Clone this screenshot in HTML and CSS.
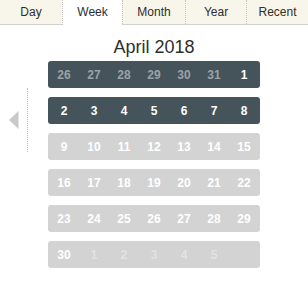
FILE: index.html
```html
<!DOCTYPE html>
<html>
<head>
<meta charset="utf-8">
<link rel="stylesheet" href="styles.css">
</head>
<body>
<div class="tabs">
  <div class="tab">Day</div>
  <div class="tab active">Week</div>
  <div class="tab">Month</div>
  <div class="tab">Year</div>
  <div class="tab">Recent</div>
</div>
<div class="main">
  <div class="nav">
    <svg class="arrow" width="10" height="18" viewBox="0 0 10 18"><polygon points="9.5,0 9.5,18 0,9" fill="#c9c9c9"/></svg>
    <div class="vline"></div>
  </div>
  <div class="cal">
    <div class="title">April 2018</div>
    <div class="weeks">
      <div class="week dark"><span class="out">26</span><span class="out">27</span><span class="out">28</span><span class="out">29</span><span class="out">30</span><span class="out">31</span><span>1</span></div>
      <div class="week dark"><span>2</span><span>3</span><span>4</span><span>5</span><span>6</span><span>7</span><span>8</span></div>
      <div class="week"><span>9</span><span>10</span><span>11</span><span>12</span><span>13</span><span>14</span><span>15</span></div>
      <div class="week"><span>16</span><span>17</span><span>18</span><span>19</span><span>20</span><span>21</span><span>22</span></div>
      <div class="week"><span>23</span><span>24</span><span>25</span><span>26</span><span>27</span><span>28</span><span>29</span></div>
      <div class="week"><span>30</span><span class="out">1</span><span class="out">2</span><span class="out">3</span><span class="out">4</span><span class="out">5</span><span class="empty"></span></div>
    </div>
  </div>
  <div class="side"></div>
</div>
</body>
</html>
```
FILE: styles.css
```css
html, body {
  margin: 0;
  padding: 0;
  background: #fff;
  font-family: "Liberation Sans", Arial, Helvetica, sans-serif;
  color: #333;
}

.tabs {
  display: grid;
  grid-template-columns: 62px 60px 63px 61px 62px;
  height: 24px;
  background: #f8f6eb;
  border-bottom: 1px solid #d0d0d0;
}

.tab {
  display: flex;
  align-items: center;
  justify-content: center;
  font-size: 12px;
  color: #2e2e2e;
  border-left: 1px dotted #c4c4c4;
  padding-bottom: 1px;
}

.tab:first-child {
  border-left: none;
}

.tab.active {
  background: #fff;
  margin-bottom: -1px;
}

.main {
  display: grid;
  grid-template-columns: 48px 212px 48px;
}

.nav {
  display: flex;
  align-items: center;
  padding-top: 63px;
  align-self: start;
  height: 64px;
}

.arrow {
  margin-left: 9px;
  display: block;
}

.vline {
  margin-left: 8px;
  width: 0;
  height: 64px;
  border-left: 1px dotted #c4c4c4;
}

.cal {
  display: flex;
  flex-direction: column;
  align-items: stretch;
}

.title {
  text-align: center;
  font-size: 18px;
  line-height: 20px;
  margin-top: 12px;
  margin-bottom: 4px;
  color: #2e2e2e;
}

.weeks {
  display: flex;
  flex-direction: column;
  gap: 9px;
}

.week {
  display: grid;
  grid-template-columns: repeat(7, 1fr);
  height: 27px;
  border-radius: 3px;
  background: #d3d3d3;
  padding: 0 1px;
}

.week span {
  display: flex;
  align-items: center;
  justify-content: center;
  font-size: 12px;
  font-weight: bold;
  color: #fff;
}

.week span.out {
  color: #e2e2e2;
}

.week.dark {
  background: #45535b;
}

.week.dark span.out {
  color: #9aa2a7;
}
```
